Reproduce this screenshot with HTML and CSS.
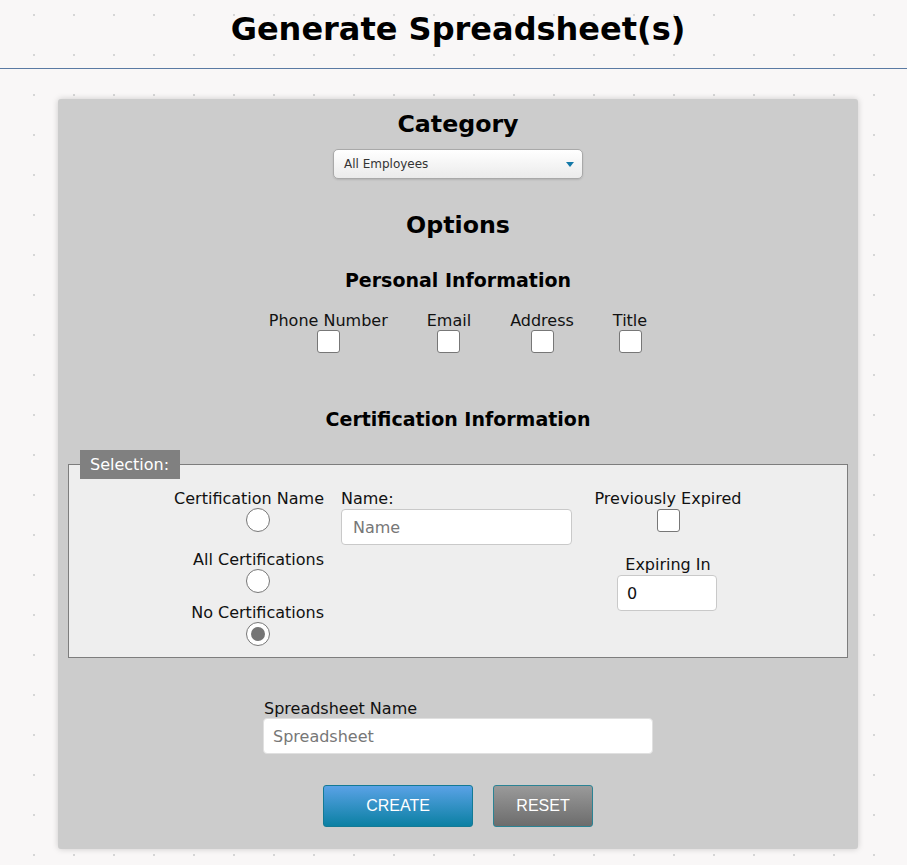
FILE: index.html
```html
<!DOCTYPE html>
<html lang="en">
<head>
<meta charset="utf-8">
<title>Generate Spreadsheet(s)</title>
<link rel="stylesheet" href="styles.css">
</head>
<body>
<header class="page-header">
  <h1 class="page-title">Generate Spreadsheet(s)</h1>
</header>
<main class="page-main">
  <form class="card">
    <h2 class="section-title">Category</h2>
    <div class="select">
      <span class="select-value">All Employees</span>
      <span class="select-arrow"></span>
    </div>

    <h2 class="section-title options-title">Options</h2>

    <h3 class="sub-title">Personal Information</h3>
    <div class="check-row">
      <label class="check-item"><span>Phone Number</span><span class="box"></span></label>
      <label class="check-item"><span>Email</span><span class="box"></span></label>
      <label class="check-item"><span>Address</span><span class="box"></span></label>
      <label class="check-item"><span>Title</span><span class="box"></span></label>
    </div>

    <h3 class="sub-title cert-title">Certification Information</h3>

    <fieldset class="selection">
      <legend class="legend">Selection:</legend>
      <div class="selection-grid">
        <div class="radio-col">
          <div class="radio-item first"><span class="radio-label">Certification Name</span><span class="radio"></span></div>
          <div class="radio-item second"><span class="radio-label">All Certifications</span><span class="radio"></span></div>
          <div class="radio-item third"><span class="radio-label">No Certifications</span><span class="radio checked"></span></div>
        </div>
        <div class="name-col">
          <span class="field-label">Name:</span>
          <div class="text-input name-input"><span class="placeholder">Name</span></div>
        </div>
        <div class="expire-col">
          <span class="field-label">Previously Expired</span>
          <span class="box"></span>
          <span class="field-label expiring-label">Expiring In</span>
          <div class="text-input num-input"><span class="value">0</span></div>
        </div>
      </div>
    </fieldset>

    <div class="sheet-field">
      <span class="field-label">Spreadsheet Name</span>
      <div class="text-input sheet-input"><span class="placeholder">Spreadsheet</span></div>
    </div>

    <div class="actions">
      <button type="button" class="btn btn-create">CREATE</button>
      <button type="button" class="btn btn-reset">RESET</button>
    </div>
  </form>
</main>
</body>
</html>
```

FILE: styles.css
```css
* { box-sizing: border-box; }

html, body {
  margin: 0;
  padding: 0;
}

body {
  background-color: #f9f7f7;
  background-image: radial-gradient(circle, #d6d6d6 0.9px, transparent 1.2px);
  background-size: 40px 40px;
  background-position: 14px -5px;
  font-family: "DejaVu Sans", Verdana, sans-serif;
  color: #111;
  width: 907px;
  min-height: 865px;
}

.page-header {
  height: 69px;
  border-bottom: 1px solid #5a7aa3;
  display: flex;
  justify-content: center;
  padding-left: 9px;
}

.page-title {
  margin: 0;
  padding-top: 10px;
  font-size: 32px;
  font-weight: bold;
  color: #000;
}

.page-main {
  padding: 30px 0 0 58px;
}

.card {
  width: 800px;
  height: 750px;
  background: #cccccc;
  border-radius: 3px;
  box-shadow: 0 0 6px rgba(0,0,0,0.18);
  display: flex;
  flex-direction: column;
  align-items: center;
  padding-top: 10px;
}

.section-title {
  margin: 0;
  font-size: 23.7px;
  font-weight: bold;
  color: #000;
  line-height: 30px;
}

.select {
  margin-top: 10px;
  width: 250px;
  height: 30px;
  border: 1px solid #a9a9a9;
  border-radius: 5px;
  background: linear-gradient(#ffffff, #ebebeb);
  box-shadow: 0 1px 2px rgba(0,0,0,0.12);
  display: flex;
  align-items: center;
  justify-content: space-between;
  padding: 0 8px 0 10px;
  font-size: 12px;
  color: #333;
}

.select-arrow {
  width: 0;
  height: 0;
  border-left: 4.5px solid transparent;
  border-right: 4.5px solid transparent;
  border-top: 5px solid #1479a8;
}

.options-title {
  margin-top: 31px;
}

.sub-title {
  margin: 0;
  font-size: 19px;
  font-weight: bold;
  color: #000;
  line-height: 24px;
}

.options-title + .sub-title {
  margin-top: 28px;
}

.check-row {
  margin-top: 20px;
  display: flex;
  gap: 39px;
}

.check-item {
  display: flex;
  flex-direction: column;
  align-items: center;
  font-size: 16px;
  line-height: 18px;
  color: #111;
}

.box {
  display: block;
  width: 23px;
  height: 23px;
  background: #fff;
  border: 1px solid #777;
  border-radius: 3px;
}

.cert-title {
  margin-top: 54px;
}

.selection {
  margin: 19px 0 0 0;
  width: 780px;
  border: 1px solid #7d7d7d;
  background: #eeeeee;
  padding: 0 10px 11px 11px;
  min-inline-size: 0;
}

.legend {
  background: #808080;
  color: #fff;
  font-size: 16px;
  line-height: 29px;
  padding: 0 11px 0 10px;
  margin-left: 0;
}

.selection-grid {
  display: flex;
  margin-top: 11px;
}

.radio-col {
  margin-left: 111px;
  width: 133px;
  display: flex;
  flex-direction: column;
}

.radio-item {
  display: flex;
  flex-direction: column;
  align-items: center;
}

.radio-label {
  align-self: flex-end;
  white-space: nowrap;
  font-size: 16px;
  line-height: 18px;
}

.radio-item.second { margin-top: 19px; }
.radio-item.third { margin-top: 11px; }

.radio {
  display: block;
  width: 24px;
  height: 24px;
  border-radius: 50%;
  background: #fff;
  border: 1px solid #777;
  position: relative;
}

.radio.checked::after {
  content: "";
  position: absolute;
  left: 4px;
  top: 4px;
  width: 14px;
  height: 14px;
  border-radius: 50%;
  background: #757575;
}

.name-col {
  margin-left: 17px;
  display: flex;
  flex-direction: column;
  align-items: flex-start;
}

.field-label {
  font-size: 16px;
  line-height: 18px;
  white-space: nowrap;
}

.text-input {
  background: #fff;
  border: 1px solid #c9c9c9;
  border-radius: 4px;
  height: 36px;
  display: flex;
  align-items: center;
  font-size: 16px;
}

.placeholder { color: #777; }
.value { color: #111; }

.name-input {
  width: 231px;
  padding-left: 11px;
  margin-top: 1px;
}

.expire-col {
  margin-left: 22px;
  width: 148px;
  display: flex;
  flex-direction: column;
  align-items: center;
}

.expire-col .box {
  margin-top: 1px;
}

.expiring-label {
  margin-top: 24px;
}

.num-input {
  width: 100px;
  padding-left: 9px;
  margin-top: 1px;
  margin-left: -2px;
}

.sheet-field {
  margin-top: 42px;
  width: 390px;
  display: flex;
  flex-direction: column;
  align-items: flex-start;
}

.sheet-field .field-label {
  margin-left: 1px;
}

.sheet-input {
  width: 390px;
  padding-left: 9px;
  border-color: #e0e0e0;
}

.actions {
  margin-top: 31px;
  display: flex;
  gap: 20px;
}

.btn {
  font-family: "Liberation Sans", Arial, sans-serif;
  font-size: 16px;
  color: #fff;
  height: 42px;
  border-radius: 3px;
  cursor: pointer;
  padding: 0;
}

.btn-create {
  width: 150px;
  border: 1px solid #137a95;
  background: linear-gradient(#5aa2e6, #0b80a3);
}

.btn-reset {
  width: 100px;
  border: 1px solid #2b8394;
  background: linear-gradient(#9a9a9a, #6c6c6c);
}
```
